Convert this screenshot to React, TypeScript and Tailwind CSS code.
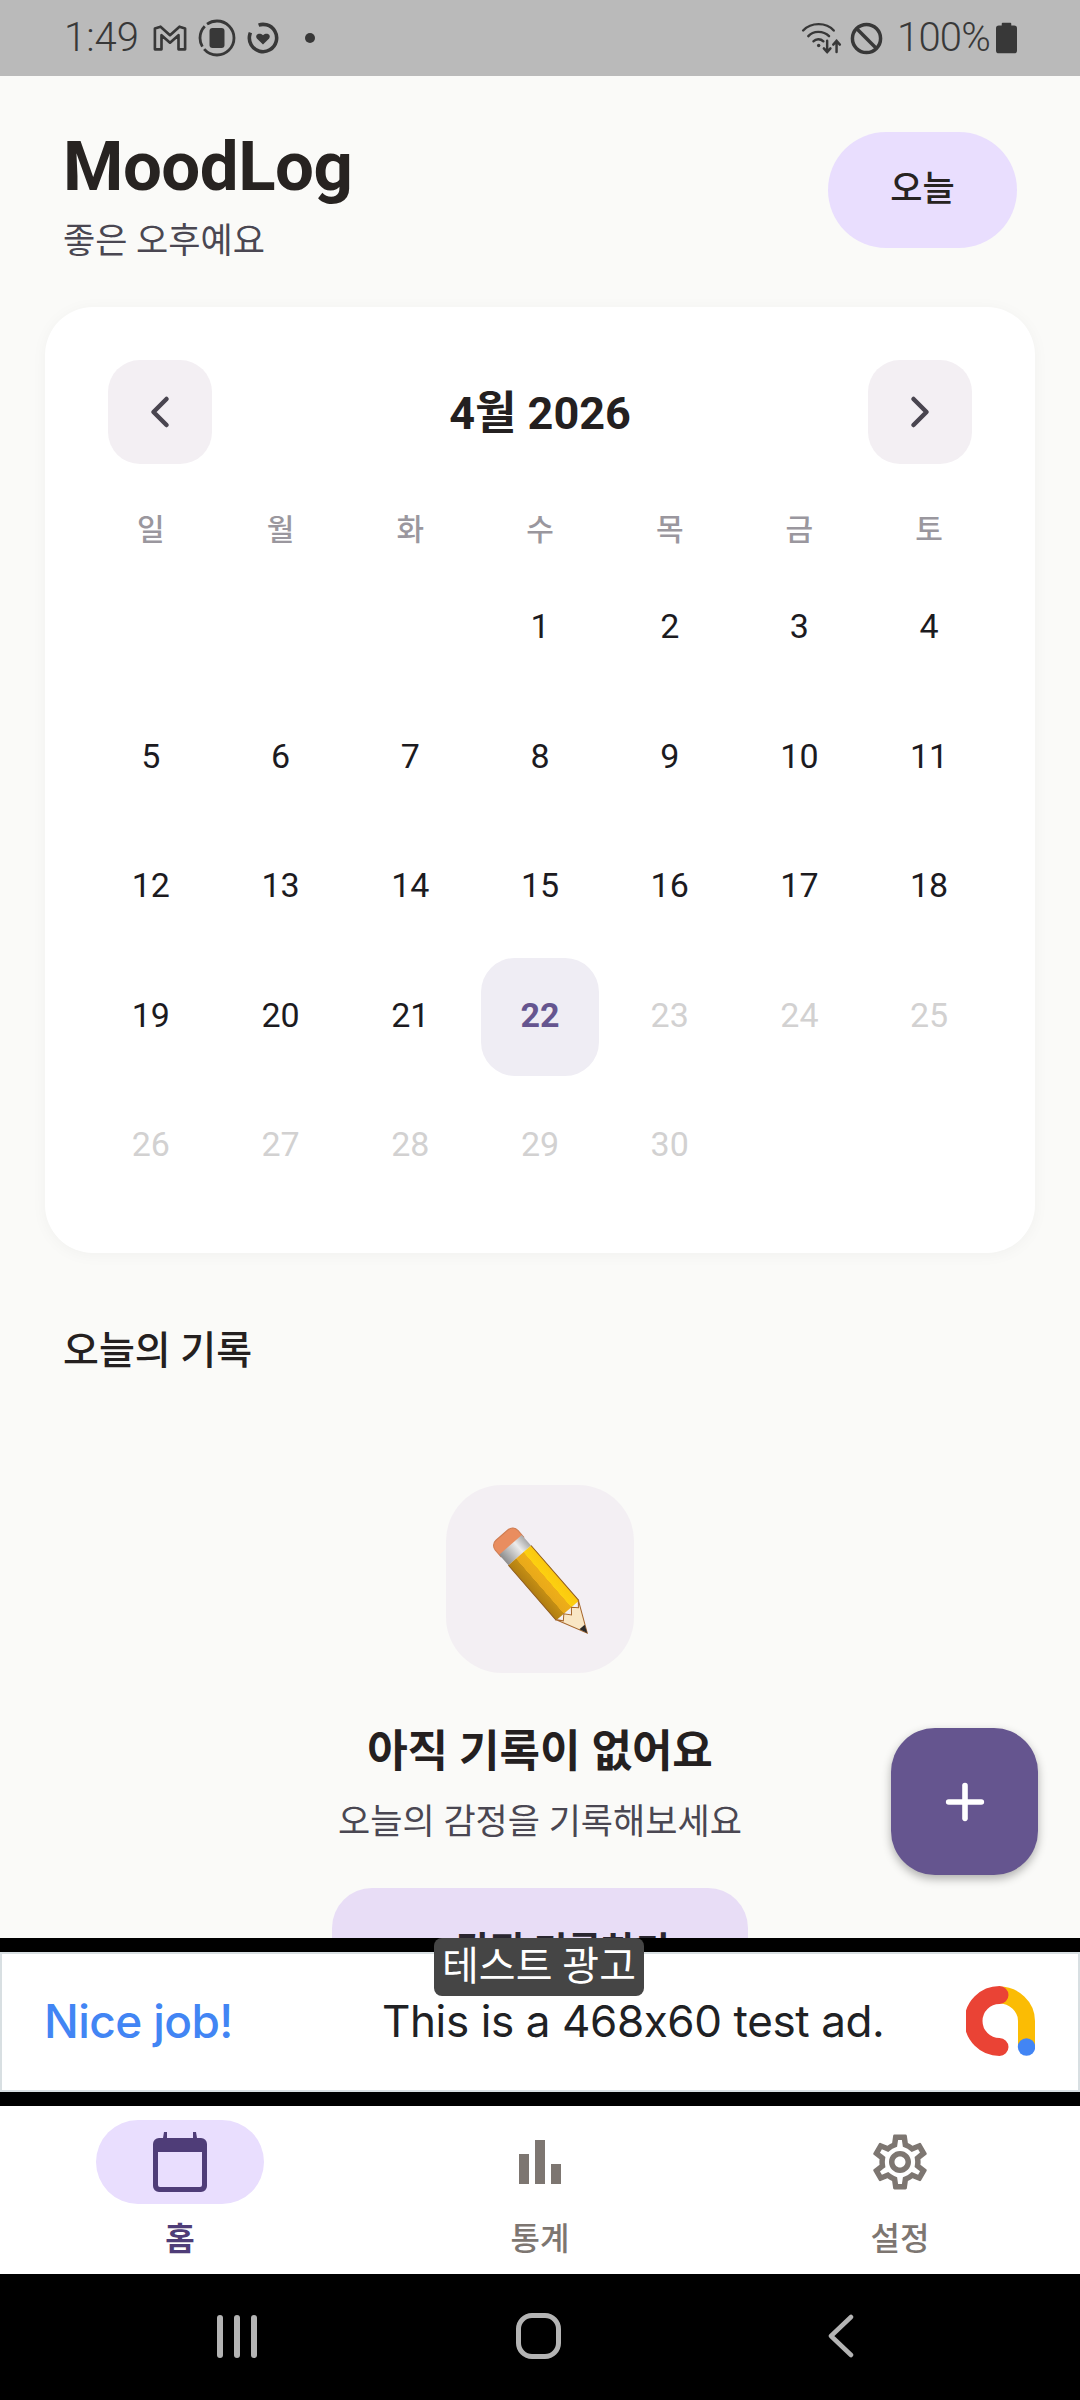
import React from "react";
import { ChevronLeft, ChevronRight, Plus } from "lucide-react";
import { MdOutlineSettings } from "react-icons/md";

const FONT = "font-['Roboto','Noto_Sans_CJK_KR',sans-serif]";

const weekdays = ["일", "월", "화", "수", "목", "금", "토"];
const days: (number | null)[] = [null, null, null];
for (let d = 1; d <= 30; d++) days.push(d);
const TODAY = 22;

function StatusBar() {
    return (
        <div className="h-[76px] shrink-0 bg-[#bababa] flex items-center justify-between pl-[64px] pr-[63px] text-[#383838]">
            <div className="flex items-center">
                <span className="text-[40px] leading-none font-light w-[89px]">1:49</span>
                <svg width="34" height="28" viewBox="0 0 36 28" fill="none" stroke="#383838" strokeWidth="2.8" strokeLinejoin="round">
                    <path d="M2 4 L8 2 L18 11 L28 2 L34 4 L34 26 L27 26 L27 11 L18 19 L9 11 L9 26 L2 26 Z" />
                </svg>
                <svg width="38" height="38" viewBox="0 0 38 38" className="ml-[11px]">
                    <circle cx="19" cy="19" r="17" fill="none" stroke="#383838" strokeWidth="2.8" strokeDasharray="41 3 22 3 38" />
                    <rect x="11.5" y="9" width="15" height="20" rx="3" fill="#383838" />
                </svg>
                <svg width="32" height="32" viewBox="0 0 34 34" className="ml-[11px]">
                    <circle cx="17" cy="17" r="14.5" fill="none" stroke="#383838" strokeWidth="3.8" strokeDasharray="70 12" transform="rotate(-75 17 17)" />
                    <path d="M17 24 L10.5 17.5 C8 14 12.5 10.5 17 14 C21.5 10.5 26 14 23.5 17.5 Z" fill="#383838" />
                </svg>
                <div className="w-[10px] h-[10px] rounded-full bg-[#383838] ml-[26px]" />
            </div>
            <div className="flex items-center">
                <svg width="41" height="32" viewBox="0 0 42 34" fill="none" stroke="#383838" strokeWidth="2.6" strokeLinecap="round">
                    <path d="M1.5 9 C10 0 26 0 34 9" />
                    <path d="M7 15 C12 9 23 9 29 15" />
                    <path d="M12.5 20.5 C15 17.5 20 17.5 23 20.5" />
                    <circle cx="18" cy="25" r="1.8" fill="#383838" stroke="none" />
                    <path d="M27 20 V32 M23.5 28 L27 32 L30.5 28" />
                    <path d="M37 32 V20 M33.5 24 L37 20 L40.5 24" />
                </svg>
                <svg width="33" height="33" viewBox="0 0 34 34" className="ml-[8px]" fill="none" stroke="#383838" strokeWidth="3.6">
                    <circle cx="17" cy="17" r="14.5" />
                    <path d="M7 7 L27 27" />
                </svg>
                <span className="text-[40px] leading-none font-light ml-[14px] tracking-[-0.8px]">100%</span>
                <svg width="21" height="32" viewBox="0 0 22 32" className="ml-[6px]" fill="#383838">
                    <path d="M7 0 H15 a1 1 0 0 1 1 1 V3 H19 a3 3 0 0 1 3 3 V29 a3 3 0 0 1 -3 3 H3 a3 3 0 0 1 -3 -3 V6 a3 3 0 0 1 3 -3 H6 V1 a1 1 0 0 1 1 -1 Z" />
                </svg>
            </div>
        </div>
    );
}

function Calendar() {
    return (
        <div className="mx-[45px] mt-[38px] h-[946px] bg-white rounded-[48px] shadow-[0_2px_16px_rgba(0,0,0,0.04)] px-[41px] pt-[53px]">
            <div className="flex items-center justify-between px-[22px]">
                <div className="w-[104px] h-[104px] rounded-[32px] bg-[#f3eff3] flex items-center justify-center text-[#49454f]">
                    <ChevronLeft size={52} strokeWidth={2.1} />
                </div>
                <span className="text-[45px] leading-none font-bold text-[#242020] pt-[2px]">4월 2026</span>
                <div className="w-[104px] h-[104px] rounded-[32px] bg-[#f3eff3] flex items-center justify-center text-[#49454f]">
                    <ChevronRight size={52} strokeWidth={2.1} />
                </div>
            </div>
            <div className="grid grid-cols-7 mt-[47px]">
                {weekdays.map((w) => (
                    <div key={w} className="h-[36px] flex items-center justify-center text-[30px] font-medium text-[#9a979e]">
                        {w}
                    </div>
                ))}
            </div>
            <div className="grid grid-cols-7 auto-rows-[129.5px] mt-[15px]">
                {days.map((d, i) => {
                    if (d === null) return <div key={i} />;
                    const future = d > TODAY;
                    const today = d === TODAY;
                    return (
                        <div key={i} className="flex items-center justify-center">
                            <div
                                className={
                                    "w-[118px] h-[118px] mt-[4px] pb-[4px] rounded-[34px] flex items-center justify-center text-[34px] " +
                                    (today ? "bg-[#efedf4] text-[#65558f] font-bold" : future ? "text-[#d2d1d1]" : "text-[#1c1b1f]")
                                }
                            >
                                {d}
                            </div>
                        </div>
                    );
                })}
            </div>
        </div>
    );
}

function Pencil() {
    return (
        <svg width="188" height="188" viewBox="0 0 188 188">
            <defs>
                <linearGradient id="body" x1="0" y1="0" x2="1" y2="0">
                    <stop offset="0" stopColor="#b07d12" />
                    <stop offset="0.33" stopColor="#c48e14" />
                    <stop offset="0.34" stopColor="#e8a91a" />
                    <stop offset="0.66" stopColor="#eeae18" />
                    <stop offset="0.67" stopColor="#fcd010" />
                    <stop offset="1" stopColor="#fbc80f" />
                </linearGradient>
                <linearGradient id="band" x1="0" y1="0" x2="1" y2="0">
                    <stop offset="0" stopColor="#8c8c8c" />
                    <stop offset="0.65" stopColor="#ececec" />
                    <stop offset="1" stopColor="#a8a8a8" />
                </linearGradient>
            </defs>
            <g transform="translate(56 50) rotate(-41)">
                <path d="M-15 16 V7 a7 7 0 0 1 7 -7 H8 a7 7 0 0 1 7 7 V16 Z" fill="#e98d5f" stroke="#cf7c50" strokeWidth="1" />
                <rect x="-15" y="13" width="30" height="14" fill="url(#band)" />
                <rect x="-15" y="27" width="30" height="73" fill="url(#body)" />
                <path d="M-15 27 V100 M15 27 V100" stroke="#8f5a1a" strokeWidth="1" />
                <path d="M-15 99 L0 130 L15 99 L10 105 L5 100 L0 106 L-5 100 L-10 105 Z" fill="#f9e6c4" stroke="#a5652a" strokeWidth="1" />
                <path d="M-3.5 122 L0 130 L3.5 122 Z" fill="#2c2a28" />
            </g>
        </svg>
    );
}

function EmptyState() {
    return (
        <div className="flex flex-col items-center mt-[111px]">
            <div className="w-[188px] h-[188px] rounded-[56px] bg-[#f3eff3]">
                <Pencil />
            </div>
            <p className="mt-[52px] text-[44px] leading-[54px] font-bold text-[#242020]">아직 기록이 없어요</p>
            <p className="mt-[22px] text-[35px] leading-[44px] text-[#4a4752]">오늘의 감정을 기록해보세요</p>
            <div className="mt-[43px] w-[416px] h-[128px] shrink-0 rounded-[40px] bg-[#e8ddf6] flex items-center justify-center gap-[10px] text-[37px] font-bold text-[#2a2630]">
                <Plus size={36} strokeWidth={2.6} />
                <span>감정 기록하기</span>
            </div>
        </div>
    );
}

function AdBanner() {
    return (
        <div className="h-[168px] shrink-0 bg-black py-[14px] relative">
            <div className="h-full bg-white border-2 border-[#d8dfe2] flex items-center pl-[42px] pr-[43px] pb-[2px] font-['Inter',sans-serif]">
                <span className="text-[46px] font-medium tracking-[-0.6px] text-[#4285f4] w-[338px] whitespace-nowrap">Nice job!</span>
                <span className="text-[44px] tracking-[-0.4px] text-[#202124] whitespace-nowrap">This is a 468x60 test ad.</span>
                <svg width="69" height="70" viewBox="0 0 69 70" className="ml-auto">
                    <path d="M33 9 A 27.5 26 0 0 1 60.5 35 V 61" fill="none" stroke="#fbbc04" strokeWidth="17" />
                    <path d="M33.5 9 A 26 26 0 0 0 33.5 61" fill="none" stroke="#ea4335" strokeWidth="18" strokeLinecap="round" />
                    <circle cx="60.5" cy="61" r="8.7" fill="#4285f4" />
                </svg>
            </div>
            <div className="absolute left-[434px] top-0 w-[210px] h-[58px] bg-[#454545] rounded-[8px] flex items-center justify-center text-[40px] leading-none text-white whitespace-nowrap">
                테스트 광고
            </div>
        </div>
    );
}

function BottomNav() {
    return (
        <div className="h-[168px] shrink-0 bg-white grid grid-cols-3">
            <div className="flex flex-col items-center pt-[14px]">
                <div className="w-[168px] h-[84px] rounded-full bg-[#e9defe] flex items-center justify-center">
                    <svg width="54" height="60" viewBox="0 0 54 60" fill="#4f3d78">
                        <path d="M11 0 h3 v6 h26 v-6 h3 l1 6 h4 a6 6 0 0 1 6 6 V54 a6 6 0 0 1 -6 6 H6 a6 6 0 0 1 -6 -6 V12 a6 6 0 0 1 6 -6 h4 Z M5 20 V53 a2 2 0 0 0 2 2 H47 a2 2 0 0 0 2 -2 V20 Z" fillRule="evenodd" />
                    </svg>
                </div>
                <span className="mt-[16px] text-[32px] leading-[38px] font-bold text-[#4f3d78]">홈</span>
            </div>
            <div className="flex flex-col items-center pt-[14px]">
                <div className="h-[84px] flex items-center justify-center">
                    <svg width="42" height="44" viewBox="0 0 42 44" fill="#7d7671">
                        <rect x="0" y="14" width="10" height="30" />
                        <rect x="16" y="0" width="10" height="44" />
                        <rect x="32" y="24" width="10" height="20" />
                    </svg>
                </div>
                <span className="mt-[16px] text-[32px] leading-[38px] font-medium text-[#7d7671]">통계</span>
            </div>
            <div className="flex flex-col items-center pt-[14px]">
                <div className="h-[84px] flex items-center justify-center text-[#7d7671]">
                    <MdOutlineSettings size={66} />
                </div>
                <span className="mt-[16px] text-[32px] leading-[38px] font-medium text-[#7d7671]">설정</span>
            </div>
        </div>
    );
}

function SystemNav() {
    return (
        <div className="h-[126px] shrink-0 bg-black flex items-center pl-[217px] pb-[2px]">
            <div className="flex gap-[11px]">
                <div className="w-[6px] h-[43px] rounded-full bg-[#b4b4b4]" />
                <div className="w-[6px] h-[43px] rounded-full bg-[#b4b4b4]" />
                <div className="w-[6px] h-[43px] rounded-full bg-[#b4b4b4]" />
            </div>
            <div className="ml-[259px] w-[45px] h-[46px] rounded-[16px] border-[5px] border-[#b4b4b4]" />
            <svg width="26" height="44" viewBox="0 0 26 44" className="ml-[267px]" fill="none" stroke="#b4b4b4" strokeWidth="4.5" strokeLinecap="round" strokeLinejoin="round">
                <path d="M23 3 L3 22 L23 41" />
            </svg>
        </div>
    );
}

export default function App() {
    return (
        <div className={"w-[1080px] h-[2400px] flex flex-col overflow-hidden bg-[#fafaf8] " + FONT}>
            <StatusBar />
            <div className="flex-1 min-h-0 relative overflow-hidden">
                <div className="flex items-start justify-between pl-[63px] pr-[63px] pt-[56px] h-[193px]">
                    <div>
                        <h1 className="text-[69px] leading-[70px] font-bold text-[#272321] tracking-[-0.5px]">MoodLog</h1>
                        <p className="mt-[19px] text-[35px] leading-[42px] text-[#4a4752]">좋은 오후예요</p>
                    </div>
                    <div className="w-[189px] h-[116px] rounded-full bg-[#e9defe] flex items-center justify-center text-[35px] font-medium text-[#272321]">
                        오늘
                    </div>
                </div>
                <Calendar />
                <p className="mt-[75px] ml-[63px] text-[39px] leading-[46px] font-medium text-[#242020]">오늘의 기록</p>
                <EmptyState />
                <div className="absolute left-[891px] top-[1652px] w-[147px] h-[147px] rounded-[44px] bg-[#65558f] shadow-[0_4px_10px_rgba(0,0,0,0.3)] flex items-center justify-center text-white">
                    <Plus size={56} strokeWidth={2.4} />
                </div>
            </div>
            <AdBanner />
            <BottomNav />
            <SystemNav />
        </div>
    );
}
